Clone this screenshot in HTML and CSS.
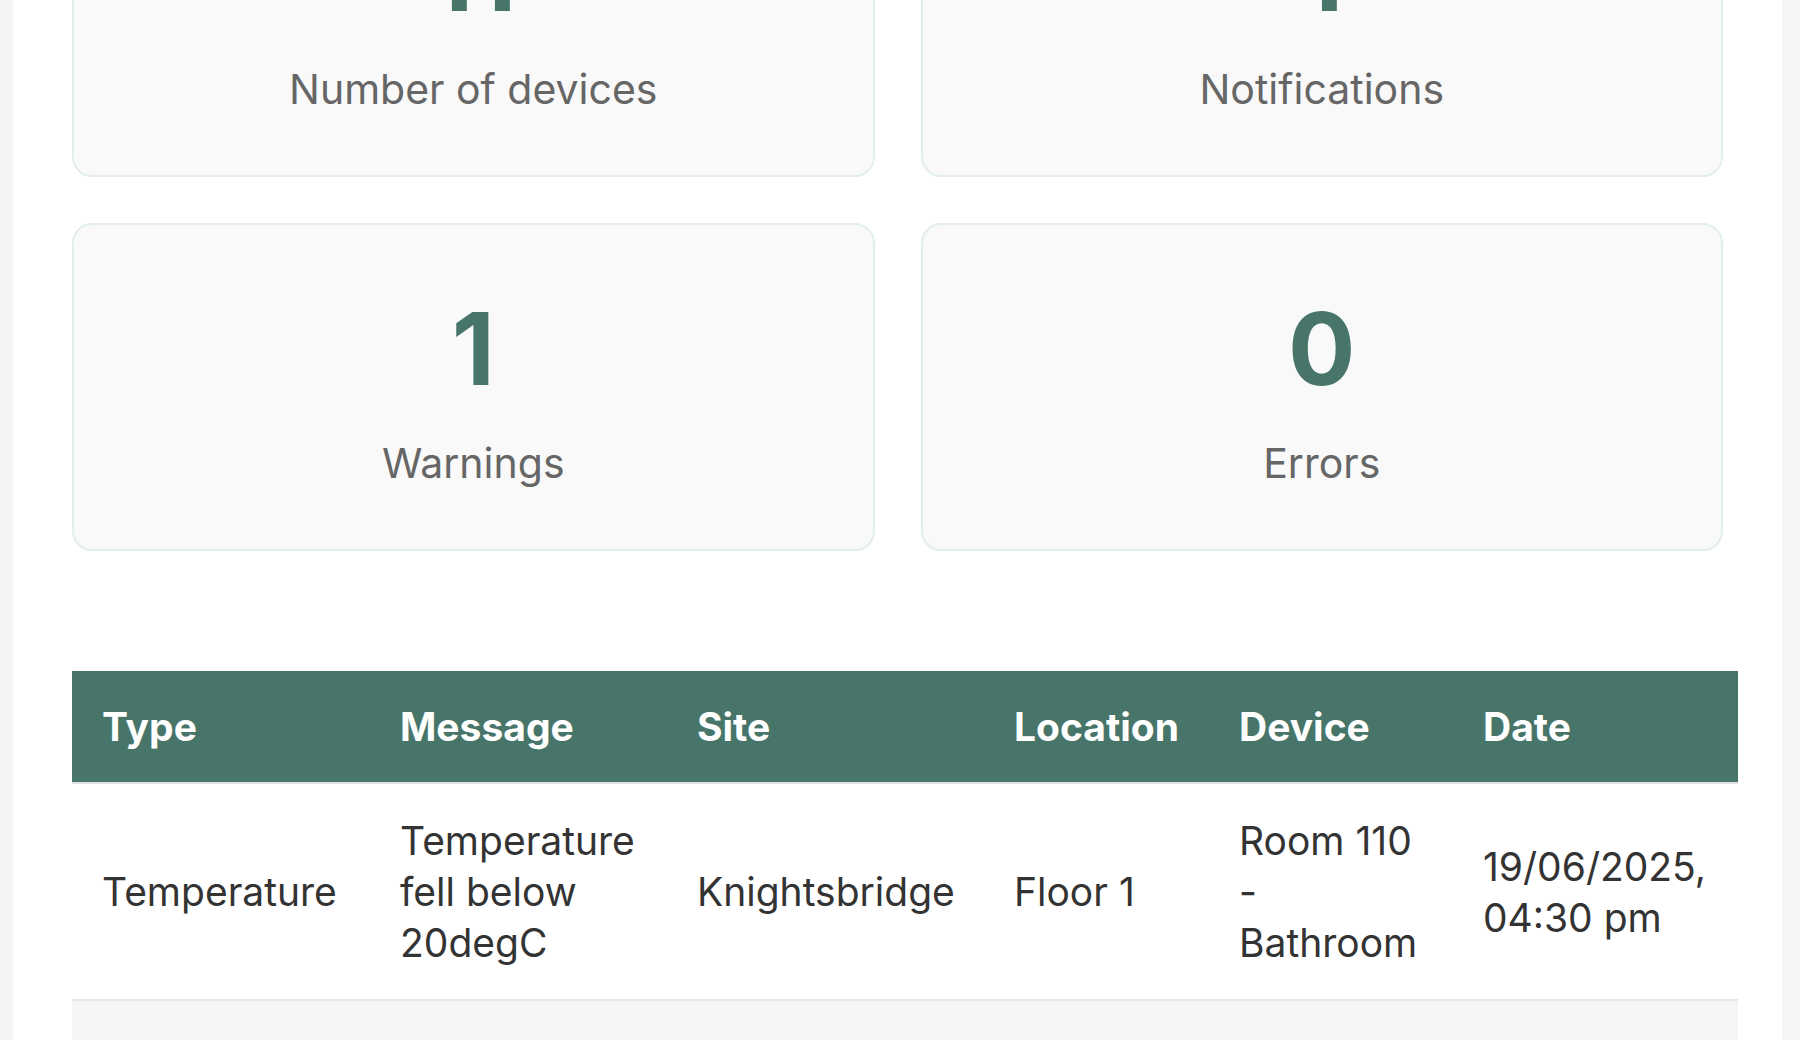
FILE: index.html
```html
<!DOCTYPE html>
<html lang="en">
<head>
  <meta charset="UTF-8">
  <title>Dashboard</title>
  <link rel="stylesheet" href="styles.css">
</head>
<body>

  <div class="app">
    <aside class="side-strip"></aside>

    <main class="dashboard">
      <section class="stats-grid">
        <div class="stat-card">
          <div class="stat-value">11</div>
          <div class="stat-label">Number of devices</div>
        </div>
        <div class="stat-card">
          <div class="stat-value">1</div>
          <div class="stat-label">Notifications</div>
        </div>
        <div class="stat-card">
          <div class="stat-value">1</div>
          <div class="stat-label">Warnings</div>
        </div>
        <div class="stat-card">
          <div class="stat-value">0</div>
          <div class="stat-label">Errors</div>
        </div>
      </section>

      <div class="table-wrap">
        <table class="alerts-table">
          <thead>
            <tr>
              <th class="col-type">Type</th>
              <th class="col-message">Message</th>
              <th class="col-site">Site</th>
              <th class="col-location">Location</th>
              <th class="col-device">Device</th>
              <th class="col-date">Date</th>
            </tr>
          </thead>
          <tbody>
            <tr>
              <td>Temperature</td>
              <td>Temperature fell below 20degC</td>
              <td>Knightsbridge</td>
              <td>Floor 1</td>
              <td>Room 110 - Bathroom</td>
              <td>19/06/2025, 04:30 pm</td>
            </tr>
            <tr class="row-alt">
              <td colspan="6"></td>
            </tr>
          </tbody>
        </table>
      </div>
    </main>

    <div class="scroll-strip"></div>
  </div>

</body>
</html>
```

FILE: styles.css
```css
body {
  margin: 0;
  font-family: Inter, 'Noto Sans', sans-serif;
  background-color: #ffffff;
  height: 1040px;
  overflow: hidden;
}

.app {
  display: flex;
  height: 1040px;
}

.side-strip {
  width: 13px;
  flex-shrink: 0;
  background-color: #f4f4f4;
}

.scroll-strip {
  width: 18px;
  flex-shrink: 0;
  background-color: #f5f5f5;
}

/* page is shown scrolled down a bit */
.dashboard {
  flex: 1;
  min-width: 0;
  padding: 0 59px;
  margin-top: -151px;
}

.stats-grid {
  display: grid;
  grid-template-columns: 1fr 1fr;
  gap: 46px;
}

.stat-card {
  display: flex;
  flex-direction: column;
  align-items: center;
  gap: 30px;
  padding: 64px 20px 61px;
  background-color: #f9f9f9;
  border: 2px solid #e2eeed;
  border-radius: 20px;
}

.stat-value {
  font-size: 100px;
  font-weight: 700;
  line-height: 1.2;
  color: #47756a;
}

.stat-label {
  font-size: 41px;
  line-height: 1.2;
  color: #666666;
}

.table-wrap {
  margin: 120px -15px 0 0;
}

.alerts-table {
  width: 100%;
  border-collapse: collapse;
  table-layout: fixed;
  font-size: 39px;
  line-height: 51px;
}

.alerts-table th {
  background-color: #47756a;
  color: #ffffff;
  font-weight: 700;
  text-align: left;
  padding: 30px;
}

.alerts-table thead tr {
  border-bottom: 2px solid #e2e2e2;
}

.alerts-table td {
  padding: 31px 30px;
  color: #333333;
  vertical-align: middle;
}

.alerts-table tbody tr {
  border-bottom: 2px solid #e6e6e6;
}

.alerts-table .row-alt td {
  background-color: #f5f5f5;
  height: 60px;
}

/* widths are content widths, 30px padding on each side */
.col-type { width: 238px; }
.col-message { width: 237px; }
.col-site { width: 257px; }
.col-location { width: 165px; }
.col-device { width: 184px; }
.col-date { width: 225px; }
```
